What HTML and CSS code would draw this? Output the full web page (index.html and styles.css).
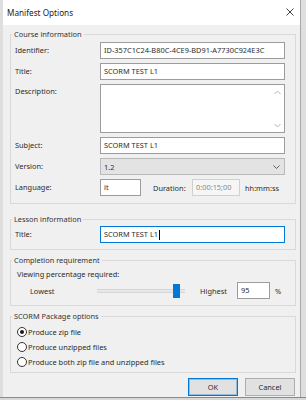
FILE: index.html
```html
<!DOCTYPE html>
<html>
<head>
    <title>Manifest Options</title>
    <link rel="stylesheet" href="styles.css">
</head>
<body>
    <div class="dialog">
        <div class="titlebar">
            <span class="titlebar-text">Manifest Options</span>
            <svg class="titlebar-close" width="8" height="8" viewBox="0 0 8 8">
                <path d="M0.5 0.5 L7.5 7.5 M7.5 0.5 L0.5 7.5" stroke="#2b2b2b" stroke-width="0.9" fill="none"/>
            </svg>
        </div>

        <div class="dialog-body">
            <div class="group group-course">
                <div class="group-title">Course information</div>
                <div class="fields">
                    <label class="field-label">Identifier:</label>
                    <div class="textbox">ID-357C1C24-B80C-4CE9-BD91-A7730C924E3C</div>

                    <label class="field-label">Title:</label>
                    <div class="textbox">SCORM TEST L1</div>

                    <label class="field-label field-label-top">Description:</label>
                    <div class="memo">
                        <div class="memo-text"></div>
                        <div class="memo-bar">
                            <svg width="7" height="5" viewBox="0 0 7 5"><path d="M0.5 4 L3.5 1 L6.5 4" stroke="#b4b4b4" fill="none"/></svg>
                            <svg width="7" height="5" viewBox="0 0 7 5"><path d="M0.5 1 L3.5 4 L6.5 1" stroke="#b4b4b4" fill="none"/></svg>
                        </div>
                    </div>

                    <label class="field-label">Subject:</label>
                    <div class="textbox">SCORM TEST L1</div>

                    <label class="field-label">Version:</label>
                    <div class="combo">
                        <span>1.2</span>
                        <svg width="7" height="4" viewBox="0 0 7 4"><path d="M0.5 0.5 L3.5 3.5 L6.5 0.5" stroke="#606060" fill="none"/></svg>
                    </div>

                    <label class="field-label">Language:</label>
                    <div class="inline-fields">
                        <div class="textbox textbox-lang">it</div>
                        <span class="inline-label">Duration:</span>
                        <div class="textbox textbox-disabled">0:00:15;00</div>
                        <span class="inline-unit">hh:mm:ss</span>
                    </div>
                </div>
            </div>

            <div class="group group-lesson">
                <div class="group-title">Lesson information</div>
                <div class="fields">
                    <label class="field-label">Title:</label>
                    <div class="textbox textbox-focus">SCORM TEST L1<span class="caret"></span></div>
                </div>
            </div>

            <div class="group group-completion">
                <div class="group-title">Completion requirement</div>
                <div class="completion-caption">Viewing percentage required:</div>
                <div class="slider-row">
                    <span class="slider-low">Lowest</span>
                    <div class="slider">
                        <div class="slider-thumb" style="margin-left: 76px"></div>
                    </div>
                    <span class="slider-high">Highest</span>
                    <div class="textbox textbox-percent">95</div>
                    <span class="slider-unit">%</span>
                </div>
            </div>

            <div class="group group-package">
                <div class="group-title">SCORM Package options</div>
                <div class="radio-list">
                    <div class="radio-item"><span class="radio radio-checked"></span>Produce zip file</div>
                    <div class="radio-item"><span class="radio"></span>Produce unzipped files</div>
                    <div class="radio-item"><span class="radio"></span>Produce both zip file and unzipped files</div>
                </div>
            </div>

            <div class="dialog-actions">
                <button class="dialog-button dialog-button-default">OK</button>
                <button class="dialog-button">Cancel</button>
            </div>
        </div>
    </div>
    <div class="backdrop-strip"></div>
</body>
</html>
```

FILE: styles.css
```css
:root {
    --face: #f0f0f0;
    --text: #2c2c2c;
    --group-border: #d9d9d9;
    --input-border: #9c9c9c;
    --accent: #0078d7;
}

html, body {
    margin: 0;
    padding: 0;
    width: 306px;
    height: 400px;
    overflow: hidden;
}

body {
    background: #dedede;
    font-family: 'Noto Sans', 'Open Sans', sans-serif;
    font-size: 7.4px;
    color: var(--text);
}

* {
    box-sizing: border-box;
}

.dialog {
    width: 298px;
    height: 397px;
    margin-left: 3px;
    background: var(--face);
    border-right: 1px solid #a8a8a8;
    display: flex;
    flex-direction: column;
}

.titlebar {
    height: 25px;
    background: #ffffff;
    display: flex;
    align-items: center;
    justify-content: space-between;
    padding: 0 6px 1px 4px;
}

.titlebar-text {
    font-size: 8.2px;
    color: #222;
}

.dialog-body {
    padding: 9px 4px 0 7px;
    display: flex;
    flex-direction: column;
}

/* group boxes */
.group {
    border: 1px solid var(--group-border);
    padding: 0 10px 7px 4px;
}

.group-title {
    width: fit-content;
    height: 13px;
    line-height: 13px;
    margin: -7px 0 1px -3px;
    padding: 0 2px;
    background: var(--face);
    color: #333;
}

.group-lesson {
    margin-top: 15px;
    padding-bottom: 6px;
}

.group-lesson .group-title {
    margin-bottom: 0;
}

.group-completion {
    margin-top: 10px;
    padding-bottom: 6px;
}

.group-package {
    margin-top: 10px;
    padding-bottom: 3px;
}

.fields {
    display: grid;
    grid-template-columns: 85px 1fr;
    row-gap: 4px;
    align-items: center;
}

.field-label {
    line-height: 13px;
}

.field-label-top {
    align-self: start;
    padding-top: 1px;
}

.textbox {
    height: 17px;
    line-height: 15px;
    border: 1px solid var(--input-border);
    background: #ffffff;
    padding: 0 3px;
    white-space: nowrap;
    overflow: hidden;
}

.textbox-focus {
    border-color: var(--accent);
    display: flex;
    align-items: center;
}

.caret {
    width: 1px;
    height: 10px;
    background: #000;
    margin-left: 1px;
}

.memo {
    height: 49px;
    border: 1px solid var(--input-border);
    background: #ffffff;
    display: flex;
}

.memo-text {
    flex: 1;
}

.memo-bar {
    width: 14px;
    display: flex;
    flex-direction: column;
    justify-content: space-between;
    align-items: center;
    padding: 5px 0 4px;
}

.combo {
    height: 17px;
    border: 1px solid #b9b9b9;
    background: #e3e3e3;
    display: flex;
    align-items: center;
    justify-content: space-between;
    padding: 0 4px 0 3px;
}

.inline-fields {
    display: flex;
    align-items: center;
}

.textbox-lang {
    width: 41px;
}

.inline-label {
    margin-left: 12px;
    width: 39px;
}

.textbox-disabled {
    width: 48px;
    border-color: #d0d0d0;
    background: #f6f6f6;
    color: #8a8a8a;
}

.inline-unit {
    margin-left: 5px;
}

/* completion */
.completion-caption {
    line-height: 13px;
    padding-left: 2px;
}

.slider-row {
    margin-top: 1px;
    display: flex;
    align-items: center;
    height: 17px;
}

.slider-low {
    margin-left: 15px;
    width: 67px;
}

.slider {
    width: 88px;
    height: 14px;
    display: flex;
    align-items: center;
    background: linear-gradient(#f0f0f0 0 5px, #d6d6d6 5px 6px, #e7e7e7 6px 8px, #d6d6d6 8px 9px, #f0f0f0 9px);
}

.slider-thumb {
    width: 7px;
    height: 14px;
    background: var(--accent);
}

.slider-high {
    margin-left: 15px;
    width: 37px;
}

.textbox-percent {
    width: 33px;
}

.slider-unit {
    margin-left: 5px;
}

/* radio buttons */
.radio-list {
    display: flex;
    flex-direction: column;
}

.radio-item {
    height: 15px;
    display: flex;
    align-items: center;
    padding-left: 2px;
}

.radio {
    width: 10px;
    height: 10px;
    border: 1px solid #333;
    border-radius: 50%;
    background: #fff;
    margin-right: 1px;
    display: flex;
    align-items: center;
    justify-content: center;
}

.radio-checked::after {
    content: "";
    width: 4px;
    height: 4px;
    border-radius: 50%;
    background: #1a1a1a;
}

/* buttons */
.dialog-actions {
    margin-top: 5px;
    display: flex;
    justify-content: flex-end;
    gap: 7px;
    padding-right: 1px;
}

.dialog-button {
    width: 50px;
    height: 18px;
    padding: 0;
    font-family: inherit;
    font-size: 7.4px;
    color: var(--text);
    background: #e1e1e1;
    border: 1px solid #adadad;
}

.dialog-button-default {
    border-color: var(--accent);
    box-shadow: inset 0 0 0 1px rgba(0, 120, 215, 0.35);
}

.backdrop-strip {
    height: 3px;
    background: #d8d8d8;
    border-top: 1px solid #8a8a8a;
}
```
